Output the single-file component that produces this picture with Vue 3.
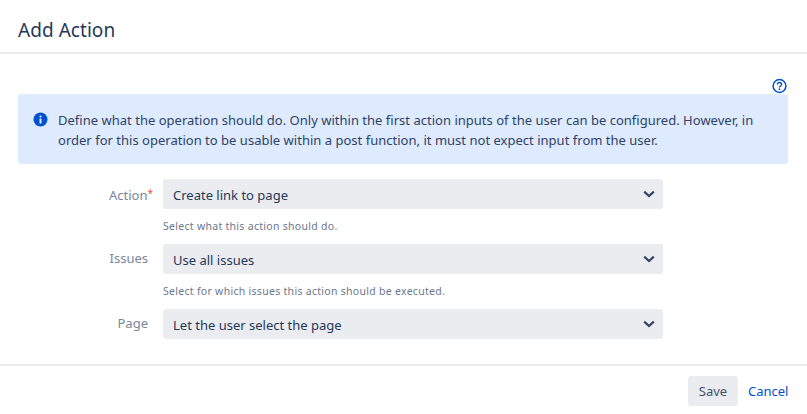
<script setup>
const fields = [
  { label: 'Action', required: true, value: 'Create link to page', help: 'Select what this action should do.' },
  { label: 'Issues', required: false, value: 'Use all issues', help: 'Select for which issues this action should be executed.' },
  { label: 'Page', required: false, value: 'Let the user select the page', help: '' },
];
</script>

<template>
  <div class="dialog">
    <header class="dialog-header">
      <h2>Add Action</h2>
    </header>
    <main class="dialog-body">
      <div class="help-row">
        <svg class="help-icon" width="16" height="16" viewBox="0 0 16 16">
          <circle cx="7.5" cy="8" r="6.4" fill="none" stroke="#0052cc" stroke-width="1.5" />
          <path d="M5.4 6.5c0-1.2 1-2 2.1-2s2.1.8 2.1 1.9c0 1.6-2.1 1.6-2.1 3.1" fill="none" stroke="#0052cc" stroke-width="1.4" />
          <circle cx="7.5" cy="11.2" r="0.9" fill="#0052cc" />
        </svg>
      </div>
      <div class="banner">
        <svg class="info-icon" width="16" height="16" viewBox="0 0 16 16">
          <circle cx="7.5" cy="7.5" r="7" fill="#0052cc" />
          <rect x="6.5" y="6.5" width="2" height="5" rx="0.5" fill="#deebff" />
          <circle cx="7.5" cy="4.5" r="1.1" fill="#deebff" />
        </svg>
        <p>Define what the operation should do. Only within the first action inputs of the user can be configured. However, in order for this operation to be usable within a post function, it must not expect input from the user.</p>
      </div>
      <form class="fields">
        <div class="field" v-for="f in fields" :key="f.label">
          <label><span class="label-text">{{ f.label }}<span v-if="f.required" class="req">*</span></span></label>
          <div class="control">
            <div class="select">
              <span class="select-value">{{ f.value }}</span>
              <svg width="14" height="10" viewBox="0 0 14 10">
                <path d="M2.2 2.6 7 7l4.8-4.4" fill="none" stroke="#344563" stroke-width="2.2" />
              </svg>
            </div>
            <div v-if="f.help" class="help">{{ f.help }}</div>
          </div>
        </div>
      </form>
    </main>
    <footer class="dialog-footer">
      <button type="button" class="save">Save</button>
      <a class="cancel">Cancel</a>
    </footer>
  </div>
</template>

<style>
body {
  background: #fff;
}
</style>

<style scoped>
.dialog {
  width: 807px;
  height: 414px;
  font-family: "Noto Sans", "Open Sans", sans-serif;
  font-size: 13px;
  color: #172b4d;
  overflow: hidden;
}

.dialog-header {
  height: 52px;
  box-sizing: border-box;
  padding: 8px 18px 0;
  display: flex;
  align-items: center;
  box-shadow: 0 2px 0 #ebecf0;
  margin-bottom: 2px;
}

.dialog-header h2 {
  margin: 0;
  font-size: 19px;
  font-weight: 400;
  letter-spacing: 0.05px;
  color: #253858;
}

.dialog-body {
  height: 312px;
  padding: 0 19px 0 18px;
  box-sizing: border-box;
  border-bottom: 2px solid #ebecf0;
}

.help-row {
  display: flex;
  justify-content: flex-end;
  padding-top: 24px;
  height: 16px;
}

.banner {
  display: flex;
  gap: 9px;
  height: 70px;
  box-sizing: border-box;
  padding: 16px 16px 16px 15px;
  background: #deebff;
  border-radius: 3px;
}

.banner p {
  margin: 0;
  line-height: 20px;
  letter-spacing: 0.015px;
  color: #2f4266;
}

.info-icon {
  flex: none;
  margin-top: 2px;
}

.fields {
  margin-top: 15px;
}

.field {
  display: flex;
  margin-bottom: 5px;
}

label {
  width: 130px;
  margin-right: 15px;
  text-align: right;
  line-height: 29px;
  color: #7a869a;
  white-space: nowrap;
}

.req {
  color: #de5a3a;
  font-size: 10px;
  vertical-align: 3px;
  margin-right: -5px;
}

.control {
  width: 500px;
}

.select {
  height: 30px;
  padding: 0 7px 0 10px;
  display: flex;
  align-items: center;
  justify-content: space-between;
  background: #ebecf0;
  border-radius: 3px;
  color: #253858;
}

.select-value {
  padding-top: 2px;
}

.help {
  height: 30px;
  line-height: 34px;
  font-size: 10.5px;
  letter-spacing: 0.29px;
  color: #6b778c;
}

.dialog-footer {
  display: flex;
  justify-content: flex-end;
  align-items: center;
  gap: 10px;
  padding: 10px 19px 0 0;
}

.save {
  width: 50px;
  height: 30px;
  border: none;
  border-radius: 3px;
  background: #ebecf0;
  color: #42526e;
  font: inherit;
  padding: 0;
}

.cancel {
  color: #0052cc;
  width: 40px;
}
</style>
